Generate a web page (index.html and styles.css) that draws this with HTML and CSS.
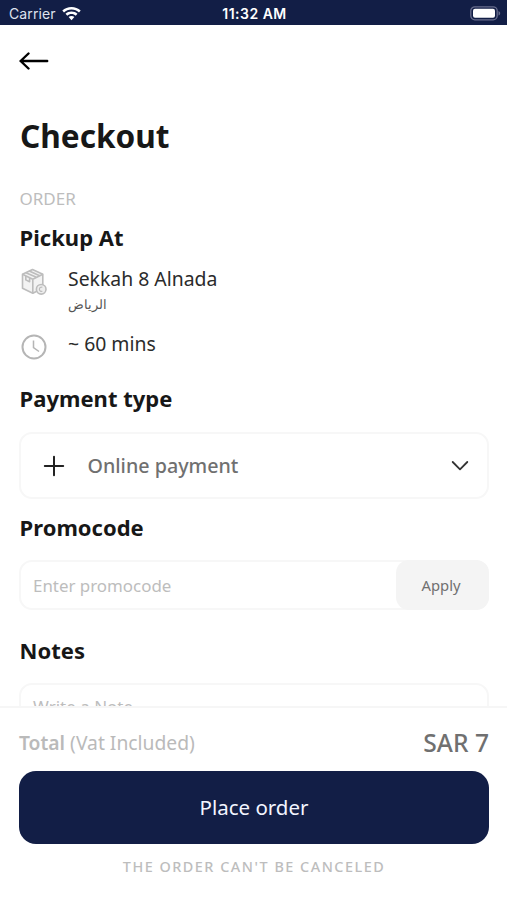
FILE: index.html
```html
<!DOCTYPE html>
<html lang="en">
<head>
<meta charset="utf-8">
<title>Checkout</title>
<link rel="stylesheet" href="styles.css">
</head>
<body>
<div class="screen">
  <header class="status">
    <div class="carrier"><span>Carrier</span>
      <svg width="19" height="14" viewBox="0 0 19 14" fill="#fff"><path d="M9.500 0C13 0 16.300 1.300 18.700 3.600L17 5.500C15 3.600 12.400 2.500 9.500 2.500S4 3.600 2 5.500L.3 3.600C2.700 1.300 6 0 9.500 0z"/><path d="M9.500 4.500c2.300 0 4.400.9 6 2.300l-1.800 1.900c-1.100-1-2.600-1.600-4.200-1.600s-3.100.6-4.200 1.600L3.500 6.800c1.600-1.400 3.700-2.300 6-2.300z"/><path d="M9.500 9c1.100 0 2.100.4 2.900 1.100l-2.900 3.100-2.900-3.100C7.400 9.400 8.400 9 9.500 9z"/></svg>
    </div>
    <div class="time">11:32 AM</div>
    <svg class="battery" width="31" height="15" viewBox="0 0 31 15"><rect x=".8" y=".8" width="26.400" height="13" rx="4" fill="none" stroke="#686d8d" stroke-width="1.300"/><rect x="3" y="2.800" width="22" height="9" rx="2" fill="#fff"/><path d="M28.500 5v4.600c1-.4 1.700-1.300 1.700-2.300S29.500 5.400 28.500 5z" fill="#686d8d"/></svg>
  </header>
  <main class="content">
    <svg class="back" width="30" height="20" viewBox="0 0 30 20" fill="none" stroke="#000" stroke-width="2.400" stroke-linecap="round" stroke-linejoin="round"><path d="M9.500 2.500 1.600 10l7.900 7.500M1.600 10h26.600"/></svg>
    <h1>Checkout</h1>
    <div class="eyebrow">ORDER</div>
    <h2>Pickup At</h2>
    <div class="info place">
      <svg width="28" height="28" viewBox="0 0 28 28" fill="none" stroke="#bdbdbd" stroke-width="1.600" stroke-linejoin="round"><path fill="#f3f3f3" d="M12.500 1.500 2.500 6.300v13.900l10.300 5 10-5V6.300z"/><path d="M2.500 6.300l10.300 4.900 10-4.900M12.800 11.200v14M5.900 4.700l10.500 4.600M9.300 3l10.300 4.800M5.800 7.900v4l3.800 1.800V9.700"/><circle cx="21.200" cy="21.300" r="4.800" fill="#eee"/><path d="M22.400 19.200c-1.800-.6-3 .6-3 2s1.200 2.600 3 2" stroke-width="1.200"/></svg>
      <div><div class="main-line">Sekkah 8 Alnada</div><div class="arabic" lang="ar" dir="rtl">الرياض</div></div>
    </div>
    <div class="info eta">
      <svg width="28" height="28" viewBox="0 0 28 28" fill="none" stroke="#b5b5b5" stroke-width="2"><circle cx="14" cy="14" r="11.500"/><path d="M13.500 7.500v7l5.500 4" stroke-width="1.500"/></svg>
      <div class="main-line">~ 60 mins</div>
    </div>
    <h2 class="pay-title">Payment type</h2>
    <div class="box pay">
      <svg width="22" height="22" viewBox="0 0 22 22" stroke="#222" stroke-width="2" stroke-linecap="round"><path d="M11 1.800v18.400M1.800 11h18.400"/></svg>
      <span>Online payment</span>
      <svg class="chevron" width="18" height="12" viewBox="0 0 18 12" fill="none" stroke="#333" stroke-width="1.800" stroke-linecap="round" stroke-linejoin="round"><path d="M1.700 2 9 9.300 16.300 2"/></svg>
    </div>
    <h2 class="promo-title">Promocode</h2>
    <div class="box promo"><span>Enter promocode</span><div class="apply">Apply</div></div>
    <h2 class="notes-title">Notes</h2>
    <div class="box notes">Write a Note..</div>
  </main>
  <footer class="summary">
    <div class="total"><div><b>Total</b> (Vat Included)</div><div class="price">SAR 7</div></div>
    <div class="place-order">Place order</div>
    <div class="caption">THE ORDER CAN'T BE CANCELED</div>
  </footer>
</div>
</body>
</html>
```
FILE: styles.css
```css
* { box-sizing: border-box; }
body { margin: 0; background: #fff; font-family: "Noto Sans", sans-serif; color: #171717; }
svg { display: block; flex: none; }
.screen { width: 507px; height: 900px; display: flex; flex-direction: column; overflow: hidden; }
.status { height: 25px; flex: none; background: #121e46; color: #fff; display: grid; grid-template-columns: 1fr auto 1fr; align-items: center; padding: 2px 6px 0 9px; font-family: Inter, sans-serif; font-size: 14px; line-height: 20px; }
.carrier { display: flex; align-items: center; gap: 6px; color: #dfe2ee; letter-spacing: .1px; }
.time { font-weight: 600; font-size: 14px; letter-spacing: .5px; margin-right: 1px; }
.battery { justify-self: end; }
.content { flex: 1; min-height: 0; overflow: hidden; padding: 26px 18px 0 19px; }
.back { margin-bottom: 43px; }
h1 { margin: 0; padding-left: 1px; font-size: 31.6px; line-height: 44px; font-weight: 700; }
.eyebrow { margin-top: 29px; padding-left: .5px; font-size: 17px; line-height: 24px; color: #bdbdbd; }
h2 { margin: 0; padding-left: .6px; font-size: 22px; line-height: 30px; font-weight: 700; }
.eyebrow + h2 { margin-top: 11px; }
.info { display: flex; gap: 20px; padding-left: 1px; }
.place { margin-top: 13px; }
.place svg { margin-top: 3px; }
.main-line { font-size: 19.4px; line-height: 27px; color: #2b2b2b; }
.arabic { font-size: 13.3px; line-height: 22px; margin-top: 1px; color: #555; text-align: left; }
.eta { margin-top: 15px; }
.eta svg { margin-top: 3px; }
.pay-title { margin-top: 22px; }
.box { border: 2px solid #f7f7f7; border-radius: 13px; }
.pay { height: 67px; margin-top: 19px; display: flex; align-items: center; padding: 0 18px 0 22px; font-size: 19.7px; font-weight: 500; color: #707070; }
.pay span { margin-left: 22.500px; flex: 1; }
.chevron { margin-top: 1px; }
.promo-title { margin-top: 13px; }
.promo { height: 50px; margin-top: 18px; display: flex; align-items: center; justify-content: space-between; padding-left: 12px; font-size: 16.900px; color: #bdbdbd; }
.apply { width: 93px; height: 50px; margin-right: -2px; border-radius: 13px; background: #f4f4f4; color: #707070; font-size: 14.800px; line-height: 51px; text-align: center; padding-right: 3px; }
.notes-title { margin-top: 25px; }
.notes { height: 110px; margin-top: 18px; padding: 10px 12px; font-size: 17px; line-height: 24px; color: #bdbdbd; }
.summary { flex: none; height: 194px; border-top: 2px solid #f6f6f6; background: #fff; padding: 18px 18px 0 19px; }
.total { display: flex; justify-content: space-between; align-items: center; height: 32px; font-size: 19.3px; color: #bababa; }
.total b { font-weight: 600; }
.price { font-size: 24.6px; font-weight: 500; color: #707070; }
.place-order { margin-top: 13px; height: 73px; border-radius: 17px; background: #121e46; color: #f2f5ff; font-size: 20.5px; line-height: 72px; text-align: center; }
.caption { margin-top: 12px; text-align: center; font-size: 14.4px; line-height: 21px; font-weight: 500; letter-spacing: 1.5px; color: #bdbdbd; }
```
